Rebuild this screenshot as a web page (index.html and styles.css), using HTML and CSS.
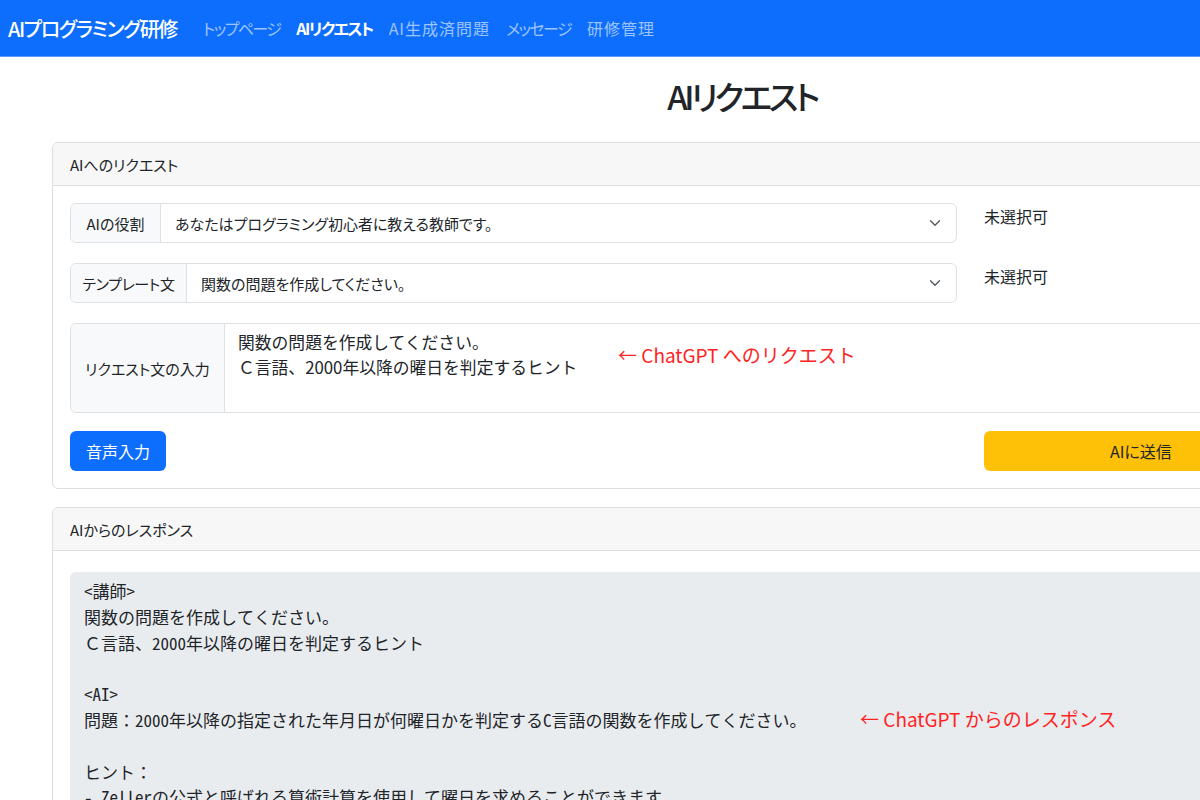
FILE: index.html
```html
<!DOCTYPE html>
<html lang="ja">
<head>
<meta charset="utf-8">
<title>AIリクエスト</title>
<link rel="stylesheet" href="styles.css">
</head>
<body>
<nav class="navbar">
  <a class="brand">AIプログラミング研修</a>
  <ul class="nav-links">
    <li><a class="nav-link">トップページ</a></li>
    <li><a class="nav-link active">AIリクエスト</a></li>
    <li><a class="nav-link kanji">AI生成済問題</a></li>
    <li><a class="nav-link">メッセージ</a></li>
    <li><a class="nav-link kanji">研修管理</a></li>
  </ul>
</nav>
<main class="page">
  <h1 class="title">AIリクエスト</h1>

  <section class="card">
    <div class="card-header">AIへのリクエスト</div>
    <div class="card-body request-body">
      <div class="form-row">
        <div class="input-group">
          <span class="addon addon-role">AIの役割</span>
          <div class="select">
            <span class="select-text">あなたはプログラミング初心者に教える教師です。</span>
            <svg class="chevron" viewBox="0 0 16 16" width="12" height="12"><path d="m2 5 6 6 6-6" fill="none" stroke="#555a60" stroke-width="1.8" stroke-linecap="round" stroke-linejoin="round"/></svg>
          </div>
        </div>
        <span class="note">未選択可</span>
      </div>
      <div class="form-row">
        <div class="input-group">
          <span class="addon addon-template">テンプレート文</span>
          <div class="select">
            <span class="select-text">関数の問題を作成してください。</span>
            <svg class="chevron" viewBox="0 0 16 16" width="12" height="12"><path d="m2 5 6 6 6-6" fill="none" stroke="#555a60" stroke-width="1.8" stroke-linecap="round" stroke-linejoin="round"/></svg>
          </div>
        </div>
        <span class="note">未選択可</span>
      </div>
      <div class="input-group textarea-group">
        <span class="addon addon-tall">リクエスト文の入力</span>
        <div class="textarea">関数の問題を作成してください。<br>Ｃ言語、2000年以降の曜日を判定するヒント</div>
        <span class="annotation annotation-request">← ChatGPT へのリクエスト</span>
      </div>
      <div class="button-row">
        <button class="btn btn-primary">音声入力</button>
        <button class="btn btn-warning">AIに送信</button>
      </div>
    </div>
  </section>

  <section class="card card-response">
    <div class="card-header">AIからのレスポンス</div>
    <div class="card-body response-body">
      <div class="response">
        <pre class="response-text">&lt;講師&gt;
関数の問題を作成してください。
Ｃ言語、2000年以降の曜日を判定するヒント

&lt;AI&gt;
問題：2000年以降の指定された年月日が何曜日かを判定するC言語の関数を作成してください。

ヒント：
- Zellerの公式と呼ばれる算術計算を使用して曜日を求めることができます。
- 1月と2月は前年の13月、14月として扱います。</pre>
        <span class="annotation annotation-response">← ChatGPT からのレスポンス</span>
      </div>
    </div>
  </section>
</main>
</body>
</html>
```

FILE: styles.css
```css
* { box-sizing: border-box; }

html, body {
  margin: 0;
  padding: 0;
  overflow: hidden;
  background: #ffffff;
}

body {
  font-family: "Noto Sans CJK JP", "Noto Sans", sans-serif;
  color: #212529;
  font-size: 15px;
  font-feature-settings: "palt";
}

/* ---------- navbar ---------- */
.navbar {
  height: 57px;
  background: #0d6efd;
  display: flex;
  align-items: center;
  padding: 0 8px;
  border-bottom: 1px solid #5a9bfd;
}

.brand {
  color: #ffffff;
  font-size: 20px;
  font-weight: 500;
  margin-right: 26px;
  letter-spacing: -1.4px;
}

.nav-links {
  list-style: none;
  display: flex;
  gap: 16px;
  margin: 0;
  padding: 0;
}

.nav-link {
  color: rgba(255, 255, 255, 0.6);
  font-size: 16px;
  letter-spacing: -1.6px;
}

.nav-link.kanji {
  letter-spacing: 1px;
}

.nav-link.active {
  color: #ffffff;
  font-weight: 700;
}

/* ---------- page ---------- */
.page {
  width: 1484px;
  padding: 0 52px;
}

.title {
  text-align: center;
  font-size: 33px;
  font-weight: 500;
  line-height: 41px;
  letter-spacing: -3.5px;
  margin: 19px 0 25px;
}

.card {
  border: 1px solid #dcdfe2;
  border-radius: 6px;
  background: #ffffff;
}

.card-response {
  margin-top: 18px;
}

.card-header {
  height: 43px;
  display: flex;
  align-items: center;
  padding: 0 17px;
  background: #f7f7f7;
  border-bottom: 1px solid #dcdfe2;
  border-radius: 6px 6px 0 0;
  font-size: 15px;
}

.card-body {
  padding: 17px;
}

.request-body {
  display: flex;
  flex-direction: column;
  gap: 20px;
  padding-bottom: 17px;
}

.form-row {
  display: grid;
  grid-template-columns: 887px 1fr;
  column-gap: 27px;
  align-items: start;
}

.input-group {
  display: flex;
  height: 40px;
  border: 1px solid #dee2e6;
  border-radius: 6px;
}

.addon {
  display: flex;
  align-items: center;
  justify-content: center;
  background: #f8f9fa;
  border-right: 1px solid #dee2e6;
  border-radius: 6px 0 0 6px;
  white-space: nowrap;
}

.addon-role { width: 90px; }
.addon-template { width: 116px; letter-spacing: -0.4px; }
.addon-tall { width: 154px; }

.select {
  flex: 1;
  display: flex;
  align-items: center;
  justify-content: space-between;
  padding: 0 15px 0 14px;
}

.chevron {
  width: 12px;
  height: 12px;
}

.note {
  font-size: 16px;
  line-height: 24px;
  padding-top: 1px;
}

.textarea-group {
  position: relative;
  height: 90px;
  margin-bottom: -2px;
}

.textarea {
  flex: 1;
  padding: 6px 13px;
  font-size: 16.8px;
  line-height: 25px;
  font-feature-settings: normal;
}

.annotation {
  position: absolute;
  color: #ff2424;
  font-size: 19px;
  line-height: 24px;
  white-space: nowrap;
  font-feature-settings: normal;
}

.annotation-request {
  left: 547px;
  top: 19px;
}

.button-row {
  display: grid;
  grid-template-columns: 887px 316px;
  column-gap: 27px;
}

.btn {
  height: 40px;
  border: 1px solid transparent;
  border-radius: 6px;
  font-family: inherit;
  font-size: 16px;
  font-feature-settings: "palt";
  padding: 0 15px;
}

.btn-primary {
  background: #0d6efd;
  color: #ffffff;
  justify-self: start;
}

.btn-warning {
  background: #ffc107;
  color: #212529;
  padding-left: 125px;
  text-align: left;
}

.response-body {
  padding-top: 21px;
}

.response {
  position: relative;
  background: #e9ecef;
  border-radius: 6px;
  height: 400px;
}

.response-text {
  margin: 0;
  padding: 6px 14px;
  font-family: "Noto Sans Mono CJK JP", "Noto Sans CJK JP", "Liberation Mono", monospace;
  font-size: 17px;
  line-height: 25.8px;
  color: #212529;
  font-feature-settings: normal;
}

.annotation-response {
  left: 790px;
  top: 135px;
}
```
